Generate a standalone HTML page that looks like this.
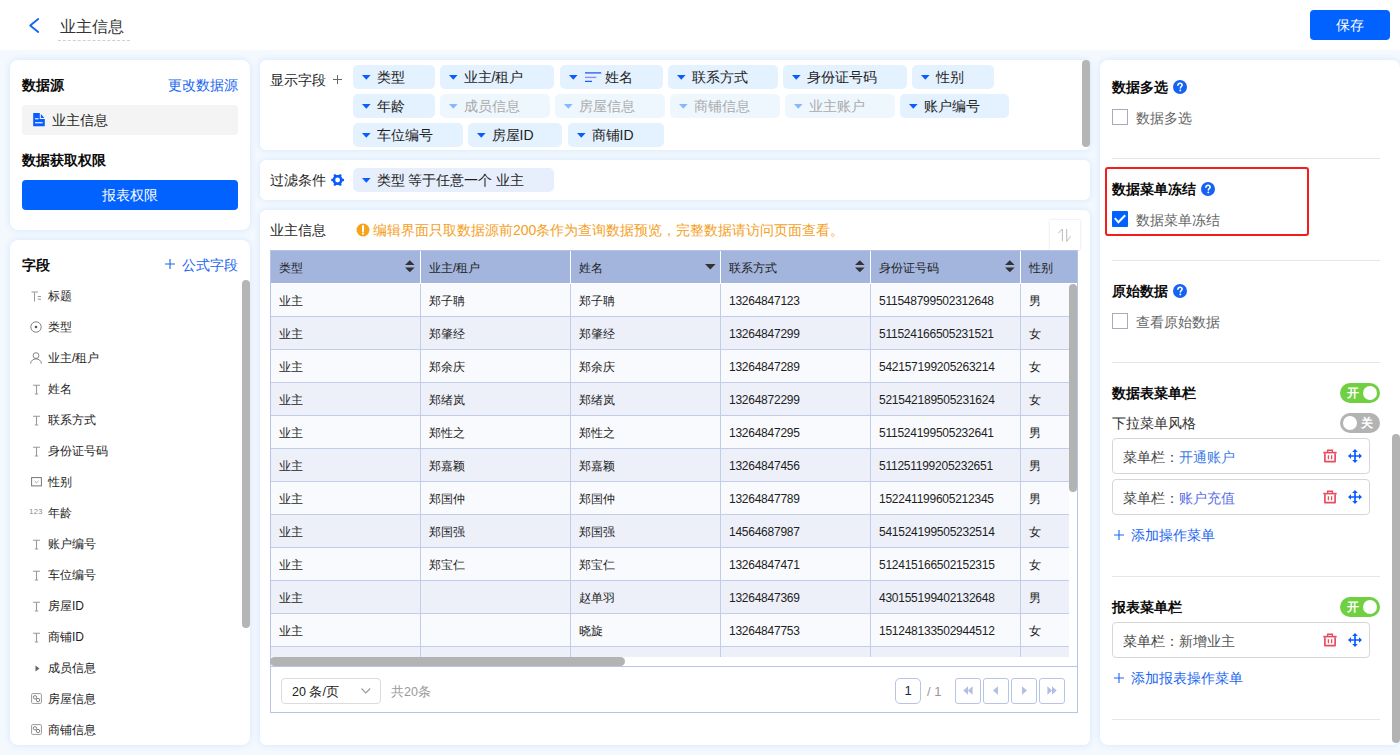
<!DOCTYPE html>
<html><head><meta charset="utf-8">
<style>
*{box-sizing:border-box;margin:0;padding:0}
html,body{width:1400px;height:755px;overflow:hidden}
body{position:relative;background:#f4f9fe;font-family:"Liberation Sans",sans-serif;color:#1e1e1e;font-size:13px}
.abs{position:absolute}
.hdr{left:0;top:0;width:1400px;height:50px;background:#fff}
.card{position:absolute;background:#fff;border-radius:8px;box-shadow:0 0 6px 1px #dbeafc}
.t{position:absolute;white-space:nowrap;line-height:1}
.b{font-weight:bold;color:#0a0a0a}
.blue{color:#1a66f0}
.chip{position:absolute;height:24px;background:#e4f1fe;border-radius:5px}
.chip.dis{background:#eff7fe;color:#aaa}
.ct{position:absolute;top:5px;font-size:14px;line-height:1;white-space:nowrap}
.num{letter-spacing:-0.25px}
.fi{left:30px;width:12px;height:16px;display:flex;align-items:center;justify-content:center}
</style></head><body>
<!-- header -->
<div class="abs hdr"></div>
<svg class="abs" style="left:26px;top:16px" width="16" height="20" viewBox="0 0 16 20"><path d="M12.2 3 L4.2 9.4 L12.2 16" fill="none" stroke="#1665f2" stroke-width="1.9" stroke-linecap="round" stroke-linejoin="round"/></svg>
<div class="t" style="left:60px;top:19px;font-size:16px;color:#333">业主信息</div>
<div class="abs" style="left:58px;top:40px;width:72px;border-top:1px dashed #d0d0d0"></div>
<div class="abs" style="left:1310px;top:10px;width:80px;height:30px;background:#0262ff;border-radius:4px;color:#fff;font-size:14px;text-align:center;line-height:30px">保存</div>

<!-- left card 1 -->
<div class="card" style="left:10px;top:60px;width:240px;height:170px"></div>
<div class="t b" style="left:22px;top:78px;font-size:14px">数据源</div>
<div class="t blue" style="left:168px;top:78px;font-size:14px">更改数据源</div>
<div class="abs" style="left:22px;top:105px;width:216px;height:30px;background:#f4f4f4;border-radius:3px"></div>
<svg class="abs" style="left:33px;top:113px" width="12" height="14" viewBox="0 0 12 14"><path d="M0.2 0H6.8V5.9H11.8V13.2H0.2Z" fill="#0a5cff"/><path d="M7.9 0.9L11.3 4.9H7.9Z" fill="#0a5cff"/><rect x="2" y="5.2" width="3.6" height="1.1" fill="#fff"/><rect x="2" y="9.2" width="7.6" height="1.1" fill="#fff"/></svg>
<div class="t" style="left:52px;top:113px;font-size:14px">业主信息</div>
<div class="t b" style="left:22px;top:153px;font-size:14px">数据获取权限</div>
<div class="abs" style="left:22px;top:180px;width:216px;height:30px;background:#0262ff;border-radius:4px;color:#fff;font-size:14px;text-align:center;line-height:30px">报表权限</div>

<!-- left card 2 -->
<div class="card" style="left:10px;top:240px;width:240px;height:505px"></div>
<div class="t b" style="left:22px;top:258px;font-size:14px">字段</div>
<svg class="abs" style="left:165px;top:259px" width="10" height="10" viewBox="0 0 10 10"><path d="M5 0V10M0 5H10" stroke="#1a66f0" stroke-width="1.1"/></svg>
<div class="t blue" style="left:182px;top:258px;font-size:14px">公式字段</div>

<div class="abs fi" style="top:288px"><svg width="11" height="11" viewBox="0 0 11 11"><path d="M0.5 1H7M3.5 1V10.5M6.8 5.5H10M6.8 8.2H10" stroke="#999" stroke-width="1" fill="none"/></svg></div><div class="t" style="left:48px;top:290px;font-size:12px">标题</div>
<div class="abs fi" style="top:319px"><svg width="12" height="12" viewBox="0 0 12 12"><circle cx="6" cy="6" r="5.2" stroke="#777" stroke-width="0.9" fill="none"/><circle cx="6" cy="6" r="1.3" fill="#555"/></svg></div><div class="t" style="left:48px;top:321px;font-size:12px">类型</div>
<div class="abs fi" style="top:350px"><svg width="12" height="12" viewBox="0 0 12 12"><circle cx="6" cy="3.6" r="2.9" stroke="#777" stroke-width="0.9" fill="none"/><path d="M0.6 11.6C1 8.6 3.2 6.9 6 6.9S11 8.6 11.4 11.6" stroke="#777" stroke-width="0.9" fill="none"/></svg></div><div class="t" style="left:48px;top:352px;font-size:12px">业主/租户</div>
<div class="abs fi" style="top:381px"><svg width="11" height="11" viewBox="0 0 11 11"><path d="M2 1.2H9M5.5 1.2V10M3.8 10H7.2" stroke="#999" stroke-width="1.1" fill="none"/></svg></div><div class="t" style="left:48px;top:383px;font-size:12px">姓名</div>
<div class="abs fi" style="top:412px"><svg width="11" height="11" viewBox="0 0 11 11"><path d="M2 1.2H9M5.5 1.2V10M3.8 10H7.2" stroke="#999" stroke-width="1.1" fill="none"/></svg></div><div class="t" style="left:48px;top:414px;font-size:12px">联系方式</div>
<div class="abs fi" style="top:443px"><svg width="11" height="11" viewBox="0 0 11 11"><path d="M2 1.2H9M5.5 1.2V10M3.8 10H7.2" stroke="#999" stroke-width="1.1" fill="none"/></svg></div><div class="t" style="left:48px;top:445px;font-size:12px">身份证号码</div>
<div class="abs fi" style="top:474px"><svg width="11" height="10" viewBox="0 0 11 10"><rect x="0.6" y="0.6" width="9.8" height="8.3" stroke="#777" stroke-width="1" fill="none"/><path d="M3.6 4L5.5 5.8L7.4 4" stroke="#888" stroke-width="0.8" fill="none"/></svg></div><div class="t" style="left:48px;top:476px;font-size:12px">性别</div>
<div class="abs fi" style="top:505px"><span style="font-size:7.5px;color:#888;letter-spacing:0.3px;position:relative;top:-1.5px">123</span></div><div class="t" style="left:48px;top:507px;font-size:12px">年龄</div>
<div class="abs fi" style="top:536px"><svg width="11" height="11" viewBox="0 0 11 11"><path d="M2 1.2H9M5.5 1.2V10M3.8 10H7.2" stroke="#999" stroke-width="1.1" fill="none"/></svg></div><div class="t" style="left:48px;top:538px;font-size:12px">账户编号</div>
<div class="abs fi" style="top:567px"><svg width="11" height="11" viewBox="0 0 11 11"><path d="M2 1.2H9M5.5 1.2V10M3.8 10H7.2" stroke="#999" stroke-width="1.1" fill="none"/></svg></div><div class="t" style="left:48px;top:569px;font-size:12px">车位编号</div>
<div class="abs fi" style="top:598px"><svg width="11" height="11" viewBox="0 0 11 11"><path d="M2 1.2H9M5.5 1.2V10M3.8 10H7.2" stroke="#999" stroke-width="1.1" fill="none"/></svg></div><div class="t" style="left:48px;top:600px;font-size:12px">房屋ID</div>
<div class="abs fi" style="top:629px"><svg width="11" height="11" viewBox="0 0 11 11"><path d="M2 1.2H9M5.5 1.2V10M3.8 10H7.2" stroke="#999" stroke-width="1.1" fill="none"/></svg></div><div class="t" style="left:48px;top:631px;font-size:12px">商铺ID</div>
<div class="abs fi" style="top:660px"><svg width="11" height="11" viewBox="0 0 11 11"><path d="M4.5 2.5L8.5 5.5L4.5 8.5Z" fill="#666"/></svg></div><div class="t" style="left:48px;top:662px;font-size:12px">成员信息</div>
<div class="abs fi" style="top:690px"><svg width="11" height="11" viewBox="0 0 11 11"><rect x="0.6" y="0.6" width="9.8" height="9.8" rx="1" stroke="#999" stroke-width="1" fill="none"/><circle cx="4" cy="4.3" r="1.7" stroke="#777" stroke-width="0.9" fill="none"/><circle cx="7" cy="7" r="1.7" stroke="#777" stroke-width="0.9" fill="none"/></svg></div><div class="t" style="left:48px;top:693px;font-size:12px">房屋信息</div>
<div class="abs fi" style="top:721px"><svg width="11" height="11" viewBox="0 0 11 11"><rect x="0.6" y="0.6" width="9.8" height="9.8" rx="1" stroke="#999" stroke-width="1" fill="none"/><circle cx="4" cy="4.3" r="1.7" stroke="#777" stroke-width="0.9" fill="none"/><circle cx="7" cy="7" r="1.7" stroke="#777" stroke-width="0.9" fill="none"/></svg></div><div class="t" style="left:48px;top:724px;font-size:12px">商铺信息</div>
<div class="abs" style="left:242px;top:280px;width:8px;height:348px;background:#b5b5b5;border-radius:4px"></div>

<!-- middle cards -->
<div class="card" style="left:260px;top:60px;width:830px;height:90px;border-radius:6px"></div>
<div class="card" style="left:260px;top:160px;width:830px;height:40px;border-radius:6px"></div>
<div class="card" style="left:260px;top:210px;width:830px;height:535px;border-radius:6px"></div>

<div class="t" style="left:270px;top:73px;font-size:14px">显示字段</div>
<svg class="abs" style="left:333px;top:75px" width="9" height="9" viewBox="0 0 9 9"><path d="M4.5 0V9M0 4.5H9" stroke="#666" stroke-width="1"/></svg>
<div class="chip" style="left:353px;top:65px;width:82px"><svg class="abs" style="left:8.5px;top:9.5px" width="9" height="5" viewBox="0 0 9 5"><path d="M0 0H8.6L4.3 4.8Z" fill="#0b5cff"/></svg><span class="ct" style="left:23.5px">类型</span></div>
<div class="chip" style="left:440px;top:65px;width:114px"><svg class="abs" style="left:8.5px;top:9.5px" width="9" height="5" viewBox="0 0 9 5"><path d="M0 0H8.6L4.3 4.8Z" fill="#0b5cff"/></svg><span class="ct" style="left:23.5px">业主/租户</span></div>
<div class="chip" style="left:560px;top:65px;width:103px"><svg class="abs" style="left:8.5px;top:9.5px" width="9" height="5" viewBox="0 0 9 5"><path d="M0 0H8.6L4.3 4.8Z" fill="#0b5cff"/></svg><svg class="abs" style="left:25px;top:7px" width="17" height="10" viewBox="0 0 17 10"><path d="M0 0.9H16.2" stroke="#1a5cff" stroke-width="1.3"/><path d="M0 5.4H11.3" stroke="#8a8cf0" stroke-width="1.3"/><path d="M0 9.4H7" stroke="#1a5cff" stroke-width="1.3"/></svg><span class="ct" style="left:45px">姓名</span></div>
<div class="chip" style="left:668px;top:65px;width:110px"><svg class="abs" style="left:8.5px;top:9.5px" width="9" height="5" viewBox="0 0 9 5"><path d="M0 0H8.6L4.3 4.8Z" fill="#0b5cff"/></svg><span class="ct" style="left:23.5px">联系方式</span></div>
<div class="chip" style="left:783px;top:65px;width:124px"><svg class="abs" style="left:8.5px;top:9.5px" width="9" height="5" viewBox="0 0 9 5"><path d="M0 0H8.6L4.3 4.8Z" fill="#0b5cff"/></svg><span class="ct" style="left:23.5px">身份证号码</span></div>
<div class="chip" style="left:912px;top:65px;width:82px"><svg class="abs" style="left:8.5px;top:9.5px" width="9" height="5" viewBox="0 0 9 5"><path d="M0 0H8.6L4.3 4.8Z" fill="#0b5cff"/></svg><span class="ct" style="left:23.5px">性别</span></div>
<div class="chip" style="left:353px;top:94px;width:82px"><svg class="abs" style="left:8.5px;top:9.5px" width="9" height="5" viewBox="0 0 9 5"><path d="M0 0H8.6L4.3 4.8Z" fill="#0b5cff"/></svg><span class="ct" style="left:23.5px">年龄</span></div>
<div class="chip dis" style="left:440px;top:94px;width:110px"><svg class="abs" style="left:8.5px;top:9.5px" width="9" height="5" viewBox="0 0 9 5"><path d="M0 0H8.6L4.3 4.8Z" fill="#8ab6ff"/></svg><span class="ct" style="left:23.5px">成员信息</span></div>
<div class="chip dis" style="left:555px;top:94px;width:110px"><svg class="abs" style="left:8.5px;top:9.5px" width="9" height="5" viewBox="0 0 9 5"><path d="M0 0H8.6L4.3 4.8Z" fill="#8ab6ff"/></svg><span class="ct" style="left:23.5px">房屋信息</span></div>
<div class="chip dis" style="left:670px;top:94px;width:110px"><svg class="abs" style="left:8.5px;top:9.5px" width="9" height="5" viewBox="0 0 9 5"><path d="M0 0H8.6L4.3 4.8Z" fill="#8ab6ff"/></svg><span class="ct" style="left:23.5px">商铺信息</span></div>
<div class="chip dis" style="left:785px;top:94px;width:110px"><svg class="abs" style="left:8.5px;top:9.5px" width="9" height="5" viewBox="0 0 9 5"><path d="M0 0H8.6L4.3 4.8Z" fill="#8ab6ff"/></svg><span class="ct" style="left:23.5px">业主账户</span></div>
<div class="chip" style="left:900px;top:94px;width:109px"><svg class="abs" style="left:8.5px;top:9.5px" width="9" height="5" viewBox="0 0 9 5"><path d="M0 0H8.6L4.3 4.8Z" fill="#0b5cff"/></svg><span class="ct" style="left:23.5px">账户编号</span></div>
<div class="chip" style="left:353px;top:123px;width:110px"><svg class="abs" style="left:8.5px;top:9.5px" width="9" height="5" viewBox="0 0 9 5"><path d="M0 0H8.6L4.3 4.8Z" fill="#0b5cff"/></svg><span class="ct" style="left:23.5px">车位编号</span></div>
<div class="chip" style="left:468px;top:123px;width:94px"><svg class="abs" style="left:8.5px;top:9.5px" width="9" height="5" viewBox="0 0 9 5"><path d="M0 0H8.6L4.3 4.8Z" fill="#0b5cff"/></svg><span class="ct" style="left:23.5px">房屋ID</span></div>
<div class="chip" style="left:568px;top:123px;width:96px"><svg class="abs" style="left:8.5px;top:9.5px" width="9" height="5" viewBox="0 0 9 5"><path d="M0 0H8.6L4.3 4.8Z" fill="#0b5cff"/></svg><span class="ct" style="left:23.5px">商铺ID</span></div>
<div class="abs" style="left:1082px;top:60px;width:8px;height:87px;background:#b5b5b5;border-radius:4px"></div>
<div class="t" style="left:270px;top:173px;font-size:14px">过滤条件</div>
<svg class="abs" style="left:331px;top:174px" width="13.2" height="12" viewBox="0 0 13.2 12"><path fill-rule="evenodd" d="M13.10 6.00 L13.07 6.34 L12.96 6.67 L12.77 6.98 L12.46 7.25 L11.43 7.29 L11.36 7.55 L11.27 7.79 L11.17 8.03 L11.06 8.27 L10.93 8.50 L10.79 8.72 L10.65 8.94 L10.49 9.15 L10.32 9.35 L10.14 9.54 L10.61 10.45 L10.53 10.85 L10.36 11.17 L10.13 11.43 L9.85 11.63 L9.54 11.77 L9.20 11.84 L8.84 11.83 L8.45 11.70 L7.89 10.83 L7.64 10.89 L7.38 10.94 L7.12 10.97 L6.86 10.99 L6.60 11.00 L6.34 10.99 L6.08 10.97 L5.82 10.94 L5.56 10.89 L5.31 10.83 L4.75 11.70 L4.36 11.83 L4.00 11.84 L3.66 11.77 L3.35 11.63 L3.07 11.43 L2.84 11.17 L2.67 10.85 L2.59 10.45 L3.06 9.54 L2.88 9.35 L2.71 9.15 L2.55 8.94 L2.41 8.72 L2.27 8.50 L2.14 8.27 L2.03 8.03 L1.93 7.79 L1.84 7.55 L1.77 7.29 L0.74 7.25 L0.43 6.98 L0.24 6.67 L0.13 6.34 L0.10 6.00 L0.13 5.66 L0.24 5.33 L0.43 5.02 L0.74 4.75 L1.77 4.71 L1.84 4.45 L1.93 4.21 L2.03 3.97 L2.14 3.73 L2.27 3.50 L2.41 3.28 L2.55 3.06 L2.71 2.85 L2.88 2.65 L3.06 2.46 L2.59 1.55 L2.67 1.15 L2.84 0.83 L3.07 0.57 L3.35 0.37 L3.66 0.23 L4.00 0.16 L4.36 0.17 L4.75 0.30 L5.31 1.17 L5.56 1.11 L5.82 1.06 L6.08 1.03 L6.34 1.01 L6.60 1.00 L6.86 1.01 L7.12 1.03 L7.38 1.06 L7.64 1.11 L7.89 1.17 L8.45 0.30 L8.84 0.17 L9.20 0.16 L9.54 0.23 L9.85 0.37 L10.13 0.57 L10.36 0.83 L10.53 1.15 L10.61 1.55 L10.14 2.46 L10.32 2.65 L10.49 2.85 L10.65 3.06 L10.79 3.28 L10.93 3.50 L11.06 3.73 L11.17 3.97 L11.27 4.21 L11.36 4.45 L11.43 4.71 L12.46 4.75 L12.77 5.02 L12.96 5.33 L13.07 5.66Z M9 6 A2.4 2.4 0 1 0 4.2 6 A2.4 2.4 0 1 0 9 6Z" fill="#0a5cff"/></svg>
<div class="chip" style="left:353px;top:168px;width:201px;background:#e8effc"><svg class="abs" style="left:8.5px;top:9.5px" width="9" height="5" viewBox="0 0 9 5"><path d="M0 0H8.6L4.3 4.8Z" fill="#0b5cff"/></svg><span class="ct" style="left:23.5px">类型 等于任意一个 业主</span></div>

<div class="t" style="left:270px;top:223px;font-size:14px">业主信息</div>
<svg class="abs" style="left:356px;top:223px" width="14" height="14" viewBox="0 0 14 14"><circle cx="7" cy="7" r="6.5" fill="#f7a21b"/><path d="M7 3V8.2" stroke="#fff" stroke-width="2" stroke-linecap="round"/><circle cx="7" cy="10.6" r="1.1" fill="#fff"/></svg>
<div class="t" style="left:373px;top:223px;font-size:14px;color:#f5a01e">编辑界面只取数据源前200条作为查询数据预览，完整数据请访问页面查看。</div>
<div class="abs" style="left:1050px;top:220px;width:30px;height:30px;background:#fff;box-shadow:0 0 2px rgba(180,170,200,0.5)"></div>
<svg class="abs" style="left:1057px;top:228px" width="15" height="14" viewBox="0 0 15 14"><path d="M5.4 13.3V1L1.3 5.1M9.7 1V13.3L13.6 8.3" fill="none" stroke="#bbb" stroke-width="1"/></svg>
<div class="abs" style="left:270px;top:250px;width:807px;height:33px;background:#a3b5dc;border-top:1px solid #b3c2e4"></div>
<div class="t" style="left:279px;top:262px;font-size:12px;color:#1e1e1e">类型</div>
<div class="t" style="left:429px;top:262px;font-size:12px;color:#1e1e1e">业主/租户</div>
<div class="abs" style="left:420px;top:251px;width:1px;height:32px;background:#fff"></div>
<div class="t" style="left:579px;top:262px;font-size:12px;color:#1e1e1e">姓名</div>
<div class="abs" style="left:570px;top:251px;width:1px;height:32px;background:#fff"></div>
<div class="t" style="left:729px;top:262px;font-size:12px;color:#1e1e1e">联系方式</div>
<div class="abs" style="left:720px;top:251px;width:1px;height:32px;background:#fff"></div>
<div class="t" style="left:879px;top:262px;font-size:12px;color:#1e1e1e">身份证号码</div>
<div class="abs" style="left:870px;top:251px;width:1px;height:32px;background:#fff"></div>
<div class="t" style="left:1029px;top:262px;font-size:12px;color:#1e1e1e">性别</div>
<div class="abs" style="left:1020px;top:251px;width:1px;height:32px;background:#fff"></div>
<svg class="abs" style="left:405px;top:260px" width="10" height="13" viewBox="0 0 10 13"><path d="M0 5H9.6L4.8 0.3Z M0 7.6H9.6L4.8 12.3Z" fill="#333"/></svg>
<svg class="abs" style="left:705px;top:264px" width="11" height="6" viewBox="0 0 11 6"><path d="M0 0H10.6L5.3 5.5Z" fill="#333"/></svg>
<svg class="abs" style="left:855px;top:260px" width="10" height="13" viewBox="0 0 10 13"><path d="M0 5H9.6L4.8 0.3Z M0 7.6H9.6L4.8 12.3Z" fill="#333"/></svg>
<svg class="abs" style="left:1005px;top:260px" width="10" height="13" viewBox="0 0 10 13"><path d="M0 5H9.6L4.8 0.3Z M0 7.6H9.6L4.8 12.3Z" fill="#333"/></svg>
<div class="abs" style="left:270px;top:284px;width:799px;height:373px;overflow:hidden">
<div class="abs" style="left:0;top:0px;width:900px;height:33px;background:#f9fafd;border-bottom:1px solid #c3cce8"></div>
<div class="t " style="left:9px;top:11px;font-size:12px">业主</div>
<div class="t " style="left:159px;top:11px;font-size:12px">郑子聃</div>
<div class="t " style="left:309px;top:11px;font-size:12px">郑子聃</div>
<div class="t num" style="left:459px;top:11px;font-size:12px">13264847123</div>
<div class="t num" style="left:609px;top:11px;font-size:12px">511548799502312648</div>
<div class="t " style="left:759px;top:11px;font-size:12px">男</div>
<div class="abs" style="left:0;top:33px;width:900px;height:33px;background:#edf0f9;border-bottom:1px solid #c3cce8"></div>
<div class="t " style="left:9px;top:44px;font-size:12px">业主</div>
<div class="t " style="left:159px;top:44px;font-size:12px">郑肇经</div>
<div class="t " style="left:309px;top:44px;font-size:12px">郑肇经</div>
<div class="t num" style="left:459px;top:44px;font-size:12px">13264847299</div>
<div class="t num" style="left:609px;top:44px;font-size:12px">511524166505231521</div>
<div class="t " style="left:759px;top:44px;font-size:12px">女</div>
<div class="abs" style="left:0;top:66px;width:900px;height:33px;background:#f9fafd;border-bottom:1px solid #c3cce8"></div>
<div class="t " style="left:9px;top:77px;font-size:12px">业主</div>
<div class="t " style="left:159px;top:77px;font-size:12px">郑余庆</div>
<div class="t " style="left:309px;top:77px;font-size:12px">郑余庆</div>
<div class="t num" style="left:459px;top:77px;font-size:12px">13264847289</div>
<div class="t num" style="left:609px;top:77px;font-size:12px">542157199205263214</div>
<div class="t " style="left:759px;top:77px;font-size:12px">女</div>
<div class="abs" style="left:0;top:99px;width:900px;height:33px;background:#edf0f9;border-bottom:1px solid #c3cce8"></div>
<div class="t " style="left:9px;top:110px;font-size:12px">业主</div>
<div class="t " style="left:159px;top:110px;font-size:12px">郑绪岚</div>
<div class="t " style="left:309px;top:110px;font-size:12px">郑绪岚</div>
<div class="t num" style="left:459px;top:110px;font-size:12px">13264872299</div>
<div class="t num" style="left:609px;top:110px;font-size:12px">521542189505231624</div>
<div class="t " style="left:759px;top:110px;font-size:12px">女</div>
<div class="abs" style="left:0;top:132px;width:900px;height:33px;background:#f9fafd;border-bottom:1px solid #c3cce8"></div>
<div class="t " style="left:9px;top:143px;font-size:12px">业主</div>
<div class="t " style="left:159px;top:143px;font-size:12px">郑性之</div>
<div class="t " style="left:309px;top:143px;font-size:12px">郑性之</div>
<div class="t num" style="left:459px;top:143px;font-size:12px">13264847295</div>
<div class="t num" style="left:609px;top:143px;font-size:12px">511524199505232641</div>
<div class="t " style="left:759px;top:143px;font-size:12px">男</div>
<div class="abs" style="left:0;top:165px;width:900px;height:33px;background:#edf0f9;border-bottom:1px solid #c3cce8"></div>
<div class="t " style="left:9px;top:176px;font-size:12px">业主</div>
<div class="t " style="left:159px;top:176px;font-size:12px">郑嘉颖</div>
<div class="t " style="left:309px;top:176px;font-size:12px">郑嘉颖</div>
<div class="t num" style="left:459px;top:176px;font-size:12px">13264847456</div>
<div class="t num" style="left:609px;top:176px;font-size:12px">511251199205232651</div>
<div class="t " style="left:759px;top:176px;font-size:12px">男</div>
<div class="abs" style="left:0;top:198px;width:900px;height:33px;background:#f9fafd;border-bottom:1px solid #c3cce8"></div>
<div class="t " style="left:9px;top:209px;font-size:12px">业主</div>
<div class="t " style="left:159px;top:209px;font-size:12px">郑国仲</div>
<div class="t " style="left:309px;top:209px;font-size:12px">郑国仲</div>
<div class="t num" style="left:459px;top:209px;font-size:12px">13264847789</div>
<div class="t num" style="left:609px;top:209px;font-size:12px">152241199605212345</div>
<div class="t " style="left:759px;top:209px;font-size:12px">男</div>
<div class="abs" style="left:0;top:231px;width:900px;height:33px;background:#edf0f9;border-bottom:1px solid #c3cce8"></div>
<div class="t " style="left:9px;top:242px;font-size:12px">业主</div>
<div class="t " style="left:159px;top:242px;font-size:12px">郑国强</div>
<div class="t " style="left:309px;top:242px;font-size:12px">郑国强</div>
<div class="t num" style="left:459px;top:242px;font-size:12px">14564687987</div>
<div class="t num" style="left:609px;top:242px;font-size:12px">541524199505232514</div>
<div class="t " style="left:759px;top:242px;font-size:12px">女</div>
<div class="abs" style="left:0;top:264px;width:900px;height:33px;background:#f9fafd;border-bottom:1px solid #c3cce8"></div>
<div class="t " style="left:9px;top:275px;font-size:12px">业主</div>
<div class="t " style="left:159px;top:275px;font-size:12px">郑宝仁</div>
<div class="t " style="left:309px;top:275px;font-size:12px">郑宝仁</div>
<div class="t num" style="left:459px;top:275px;font-size:12px">13264847471</div>
<div class="t num" style="left:609px;top:275px;font-size:12px">512415166502152315</div>
<div class="t " style="left:759px;top:275px;font-size:12px">女</div>
<div class="abs" style="left:0;top:297px;width:900px;height:33px;background:#edf0f9;border-bottom:1px solid #c3cce8"></div>
<div class="t " style="left:9px;top:308px;font-size:12px">业主</div>
<div class="t " style="left:309px;top:308px;font-size:12px">赵单羽</div>
<div class="t num" style="left:459px;top:308px;font-size:12px">13264847369</div>
<div class="t num" style="left:609px;top:308px;font-size:12px">430155199402132648</div>
<div class="t " style="left:759px;top:308px;font-size:12px">男</div>
<div class="abs" style="left:0;top:330px;width:900px;height:33px;background:#f9fafd;border-bottom:1px solid #c3cce8"></div>
<div class="t " style="left:9px;top:341px;font-size:12px">业主</div>
<div class="t " style="left:309px;top:341px;font-size:12px">晓旋</div>
<div class="t num" style="left:459px;top:341px;font-size:12px">13264847753</div>
<div class="t num" style="left:609px;top:341px;font-size:12px">151248133502944512</div>
<div class="t " style="left:759px;top:341px;font-size:12px">女</div>
<div class="abs" style="left:0;top:363px;width:900px;height:33px;background:#edf0f9;border-bottom:1px solid #c3cce8"></div>
<div class="abs" style="left:150px;top:0;width:1px;height:374px;background:#c3cce8"></div>
<div class="abs" style="left:300px;top:0;width:1px;height:374px;background:#c3cce8"></div>
<div class="abs" style="left:450px;top:0;width:1px;height:374px;background:#c3cce8"></div>
<div class="abs" style="left:600px;top:0;width:1px;height:374px;background:#c3cce8"></div>
<div class="abs" style="left:750px;top:0;width:1px;height:374px;background:#c3cce8"></div>
</div>
<div class="abs" style="left:270px;top:250px;width:1px;height:463px;background:#b8c4e4"></div>
<div class="abs" style="left:1077px;top:250px;width:1px;height:463px;background:#b8c4e4"></div>
<div class="abs" style="left:1069px;top:283px;width:8px;height:374px;background:#fff"></div>
<div class="abs" style="left:1069px;top:284px;width:8px;height:208px;background:#b3b3b3;border-radius:4px"></div>
<div class="abs" style="left:271px;top:657px;width:806px;height:9px;background:#fff"></div>
<div class="abs" style="left:270px;top:657px;width:355px;height:9px;background:#b3b3b3;border-radius:4.5px"></div>
<div class="abs" style="left:270px;top:666px;width:808px;height:1px;background:#b8c4e4"></div>
<div class="abs" style="left:270px;top:712px;width:808px;height:1px;background:#b8c4e4"></div>
<div class="abs" style="left:281px;top:678px;width:100px;height:26px;border:1px solid #dcdcdc;border-radius:4px"></div>
<div class="t" style="left:292px;top:685.5px;font-size:12.5px;color:#222">20 条/页</div>
<svg class="abs" style="left:361px;top:688px" width="10" height="6" viewBox="0 0 10 6"><path d="M0.5 0.5L4.8 5L9.2 0.5" fill="none" stroke="#999" stroke-width="1.1"/></svg>
<div class="t" style="left:391px;top:685.5px;font-size:12.5px;color:#999">共20条</div>
<div class="abs" style="left:895px;top:678px;width:26px;height:26px;border:1px solid #b8c4e4;border-radius:5px;font-size:13px;text-align:center;line-height:24px;color:#1c2a44">1</div>
<div class="t" style="left:927px;top:685px;font-size:13px;color:#999">/ 1</div>
<div class="abs" style="left:955px;top:678px;width:26px;height:26px;border:1px solid #b8c4e4;border-radius:3px"></div>
<div class="abs" style="left:983px;top:678px;width:26px;height:26px;border:1px solid #b8c4e4;border-radius:3px"></div>
<div class="abs" style="left:1011px;top:678px;width:26px;height:26px;border:1px solid #b8c4e4;border-radius:3px"></div>
<div class="abs" style="left:1039px;top:678px;width:26px;height:26px;border:1px solid #b8c4e4;border-radius:3px"></div>
<svg class="abs" style="left:963px;top:686px" width="10" height="9" viewBox="0 0 10 9"><path d="M5 0.3L0.3 4.5L5 8.7Z M9.6 0.3L4.9 4.5L9.6 8.7Z" fill="#b0bfe3"/></svg>
<svg class="abs" style="left:992px;top:686px" width="7" height="9" viewBox="0 0 7 9"><path d="M6 0.3L1 4.5L6 8.7Z" fill="#b0bfe3"/></svg>
<svg class="abs" style="left:1021px;top:686px" width="7" height="9" viewBox="0 0 7 9"><path d="M1 0.3L6 4.5L1 8.7Z" fill="#b0bfe3"/></svg>
<svg class="abs" style="left:1047px;top:686px" width="10" height="9" viewBox="0 0 10 9"><path d="M0.4 0.3L5.1 4.5L0.4 8.7Z M5 0.3L9.7 4.5L5 8.7Z" fill="#b0bfe3"/></svg>
<!-- right card -->
<div class="card" style="left:1100px;top:60px;width:300px;height:685px"></div>
<div class="t b" style="left:1112px;top:80px;font-size:14px">数据多选</div>
<svg class="abs" style="left:1173px;top:80px" width="14" height="14" viewBox="0 0 14 14"><circle cx="7" cy="7" r="7" fill="#1463f3"/><path d="M4.9 5.3C4.9 4.1 5.8 3.3 7 3.3S9.1 4.1 9.1 5.2C9.1 6.4 7.4 6.6 7.4 8" fill="none" stroke="#fff" stroke-width="1.6" stroke-linecap="round"/><circle cx="7.3" cy="10.4" r="0.95" fill="#fff"/></svg>
<div class="abs" style="left:1112px;top:109px;width:16px;height:16px;border:1px solid #a9a9bd;background:#fff"></div>
<div class="t" style="left:1136px;top:111px;font-size:14px;color:#666">数据多选</div>
<div class="abs" style="left:1112px;top:158px;width:268px;height:1px;background:#e6e6e6"></div>
<div class="abs" style="left:1105px;top:167px;width:204px;height:69px;border:2px solid #f41c1c;border-radius:3px"></div>
<div class="t b" style="left:1112px;top:182px;font-size:14px">数据菜单冻结</div>
<svg class="abs" style="left:1201px;top:182px" width="14" height="14" viewBox="0 0 14 14"><circle cx="7" cy="7" r="7" fill="#1463f3"/><path d="M4.9 5.3C4.9 4.1 5.8 3.3 7 3.3S9.1 4.1 9.1 5.2C9.1 6.4 7.4 6.6 7.4 8" fill="none" stroke="#fff" stroke-width="1.6" stroke-linecap="round"/><circle cx="7.3" cy="10.4" r="0.95" fill="#fff"/></svg>
<div class="abs" style="left:1112px;top:211px;width:16px;height:16px;background:#0262ff;border-radius:1px"><svg class="abs" style="left:0;top:0" width="16" height="16" viewBox="0 0 16 16"><path d="M2.8 7.2L6.4 11.2L13.2 4.2" fill="none" stroke="#fff" stroke-width="2"/></svg></div>
<div class="t" style="left:1136px;top:213px;font-size:14px;color:#666">数据菜单冻结</div>
<div class="abs" style="left:1112px;top:260px;width:268px;height:1px;background:#e6e6e6"></div>
<div class="t b" style="left:1112px;top:284px;font-size:14px">原始数据</div>
<svg class="abs" style="left:1173px;top:284px" width="14" height="14" viewBox="0 0 14 14"><circle cx="7" cy="7" r="7" fill="#1463f3"/><path d="M4.9 5.3C4.9 4.1 5.8 3.3 7 3.3S9.1 4.1 9.1 5.2C9.1 6.4 7.4 6.6 7.4 8" fill="none" stroke="#fff" stroke-width="1.6" stroke-linecap="round"/><circle cx="7.3" cy="10.4" r="0.95" fill="#fff"/></svg>
<div class="abs" style="left:1112px;top:313px;width:16px;height:16px;border:1px solid #a9a9bd;background:#fff"></div>
<div class="t" style="left:1136px;top:315px;font-size:14px;color:#666">查看原始数据</div>
<div class="abs" style="left:1112px;top:362px;width:268px;height:1px;background:#e6e6e6"></div>
<div class="t b" style="left:1112px;top:386px;font-size:14px">数据表菜单栏</div>
<div class="abs" style="left:1340px;top:383px;width:40px;height:20px;border-radius:10px;background:#71cf42"><div class="abs" style="left:23px;top:3px;width:14px;height:14px;border-radius:7px;background:#fff"></div><div class="t" style="left:7px;top:3.5px;font-size:12px;font-weight:bold;color:#fff">开</div></div>
<div class="t" style="left:1112px;top:416px;font-size:14px;color:#333">下拉菜单风格</div>
<div class="abs" style="left:1340px;top:413px;width:40px;height:20px;border-radius:10px;background:#b3b3b3"><div class="abs" style="left:3px;top:3px;width:14px;height:14px;border-radius:7px;background:#fff"></div><div class="t" style="left:21px;top:3.5px;font-size:12px;font-weight:bold;color:#fff">关</div></div>
<div class="abs" style="left:1112px;top:438px;width:258px;height:36px;border:1px solid #d6d6d6;border-radius:4px"></div><div class="t" style="left:1123px;top:450px;font-size:14px;color:#444">菜单栏：<span style="color:#3d7de6">开通账户</span></div><svg class="abs" style="left:1323px;top:449px" width="14" height="14" viewBox="0 0 14 14"><path d="M4.6 3V1.2H9.4V3" fill="none" stroke="#e84c5e" stroke-width="1.4"/><path d="M0.3 3.6H13.7" stroke="#e84c5e" stroke-width="1.6"/><path d="M1.9 4.2V12.6H12.1V4.2" fill="none" stroke="#e84c5e" stroke-width="1.7" stroke-linejoin="round"/><path d="M5.4 6.3V10.3M8.6 6.3V10.3" stroke="#e84c5e" stroke-width="1.3"/></svg><svg class="abs" style="left:1348px;top:449px" width="14" height="14" viewBox="0 0 14 14"><path d="M7 1.5V12.5M1.5 7H12.5" stroke="#0a5cff" stroke-width="1.7"/><path d="M7 0L9.8 3H4.2Z M7 14L9.8 11H4.2Z M0 7L3 4.2V9.8Z M14 7L11 4.2V9.8Z" fill="#0a5cff"/></svg>
<div class="abs" style="left:1112px;top:479px;width:258px;height:36px;border:1px solid #d6d6d6;border-radius:4px"></div><div class="t" style="left:1123px;top:491px;font-size:14px;color:#444">菜单栏：<span style="color:#5a6ee6">账户充值</span></div><svg class="abs" style="left:1323px;top:490px" width="14" height="14" viewBox="0 0 14 14"><path d="M4.6 3V1.2H9.4V3" fill="none" stroke="#e84c5e" stroke-width="1.4"/><path d="M0.3 3.6H13.7" stroke="#e84c5e" stroke-width="1.6"/><path d="M1.9 4.2V12.6H12.1V4.2" fill="none" stroke="#e84c5e" stroke-width="1.7" stroke-linejoin="round"/><path d="M5.4 6.3V10.3M8.6 6.3V10.3" stroke="#e84c5e" stroke-width="1.3"/></svg><svg class="abs" style="left:1348px;top:490px" width="14" height="14" viewBox="0 0 14 14"><path d="M7 1.5V12.5M1.5 7H12.5" stroke="#0a5cff" stroke-width="1.7"/><path d="M7 0L9.8 3H4.2Z M7 14L9.8 11H4.2Z M0 7L3 4.2V9.8Z M14 7L11 4.2V9.8Z" fill="#0a5cff"/></svg>
<svg class="abs" style="left:1114px;top:530px" width="10" height="10" viewBox="0 0 10 10"><path d="M5 0V10M0 5H10" stroke="#1a66f0" stroke-width="1.1"/></svg>
<div class="t blue" style="left:1131px;top:528px;font-size:14px">添加操作菜单</div>
<div class="abs" style="left:1112px;top:576px;width:268px;height:1px;background:#e6e6e6"></div>
<div class="t b" style="left:1112px;top:600px;font-size:14px">报表菜单栏</div>
<div class="abs" style="left:1340px;top:597px;width:40px;height:20px;border-radius:10px;background:#71cf42"><div class="abs" style="left:23px;top:3px;width:14px;height:14px;border-radius:7px;background:#fff"></div><div class="t" style="left:7px;top:3.5px;font-size:12px;font-weight:bold;color:#fff">开</div></div>
<div class="abs" style="left:1112px;top:622px;width:258px;height:36px;border:1px solid #d6d6d6;border-radius:4px"></div><div class="t" style="left:1123px;top:634px;font-size:14px;color:#444">菜单栏：<span style="color:#555">新增业主</span></div><svg class="abs" style="left:1323px;top:633px" width="14" height="14" viewBox="0 0 14 14"><path d="M4.6 3V1.2H9.4V3" fill="none" stroke="#e84c5e" stroke-width="1.4"/><path d="M0.3 3.6H13.7" stroke="#e84c5e" stroke-width="1.6"/><path d="M1.9 4.2V12.6H12.1V4.2" fill="none" stroke="#e84c5e" stroke-width="1.7" stroke-linejoin="round"/><path d="M5.4 6.3V10.3M8.6 6.3V10.3" stroke="#e84c5e" stroke-width="1.3"/></svg><svg class="abs" style="left:1348px;top:633px" width="14" height="14" viewBox="0 0 14 14"><path d="M7 1.5V12.5M1.5 7H12.5" stroke="#0a5cff" stroke-width="1.7"/><path d="M7 0L9.8 3H4.2Z M7 14L9.8 11H4.2Z M0 7L3 4.2V9.8Z M14 7L11 4.2V9.8Z" fill="#0a5cff"/></svg>
<svg class="abs" style="left:1114px;top:673px" width="10" height="10" viewBox="0 0 10 10"><path d="M5 0V10M0 5H10" stroke="#1a66f0" stroke-width="1.1"/></svg>
<div class="t blue" style="left:1131px;top:671px;font-size:14px">添加报表操作菜单</div>
<div class="abs" style="left:1112px;top:719px;width:268px;height:1px;background:#e6e6e6"></div>
<div class="abs" style="left:1392px;top:434px;width:8px;height:309px;background:#b3b3b3;border-radius:4px"></div>
</body></html>
